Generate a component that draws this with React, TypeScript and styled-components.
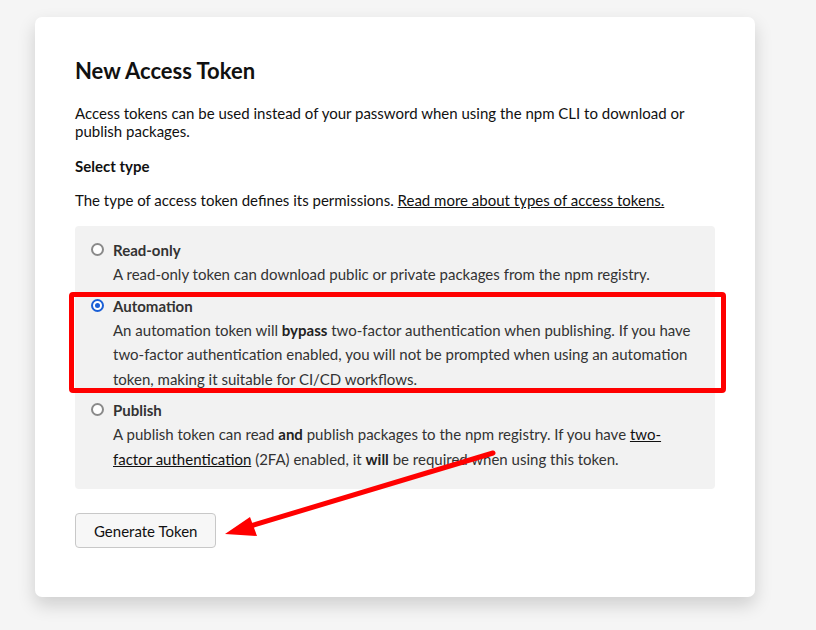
import React from "react";
import styled, { createGlobalStyle } from "styled-components";

const Global = createGlobalStyle`
  html, body { margin: 0; padding: 0; background: #f5f5f5; }
  body { font-family: "Lato", "Noto Sans", sans-serif; color: #111; }
  * { box-sizing: border-box; }
`;

const Page = styled.div`
  width: 816px;
  height: 630px;
  padding: 17px 0 0 35px;
`;

const Card = styled.div`
  position: relative;
  width: 720px;
  height: 580px;
  background: #fff;
  border-radius: 7px;
  box-shadow: 0 8px 18px rgba(0, 0, 0, 0.16);
  padding: 40px 40px;
`;

const Title = styled.h1`
  margin: 0 0 19px 0;
  font-size: 22px;
  line-height: 28px;
  font-weight: 700;
  color: #111;
`;

const Para = styled.p<{ $mb?: number }>`
  margin: 0 0 ${(p) => p.$mb ?? 0}px 0;
  font-size: 15px;
  line-height: 18px;
  color: #111;
`;

const SubHead = styled.div`
  margin: 0 0 16px 0;
  font-size: 15px;
  line-height: 18px;
  font-weight: 700;
  color: #111;
`;

const Link = styled.a`
  color: #111;
  text-decoration: underline;
`;

const Options = styled.div`
  margin-top: 17px;
  background: #f2f2f2;
  border-radius: 4px;
  padding: 12px 16px 18px 16px;
  display: flex;
  flex-direction: column;
  gap: 7px;
`;

const Option = styled.div`
  position: relative;
  display: flex;
  gap: 9px;
  align-items: flex-start;
`;

const OptionBody = styled.div`
  flex: 1;
  display: flex;
  flex-direction: column;
`;

const Radio = styled.span<{ $checked?: boolean }>`
  flex: none;
  margin-top: 5px;
  width: 13px;
  height: 13px;
  border-radius: 50%;
  border: 2px solid ${(p) => (p.$checked ? "#1a5fd6" : "#8a8a8a")};
  background: #fff;
  display: flex;
  align-items: center;
  justify-content: center;
  &::after {
    content: "";
    width: 5px;
    height: 5px;
    border-radius: 50%;
    background: ${(p) => (p.$checked ? "#1a5fd6" : "transparent")};
  }
`;

const OptionLabel = styled.div`
  font-size: 15px;
  line-height: 24px;
  font-weight: 700;
  color: #333;
`;

const OptionDesc = styled.div`
  font-size: 15px;
  line-height: 24.5px;
  color: #333;
  b { color: #222; }
  a { color: #111; text-decoration: underline; }
`;

const Highlight = styled.div`
  position: absolute;
  left: -22px;
  right: -27px;
  top: -2px;
  bottom: -2px;
  border: 5px solid #ff0000;
  border-radius: 4px;
  pointer-events: none;
`;

const Button = styled.button`
  margin-top: 24px;
  height: 35px;
  padding: 0 18px;
  background: #f7f7f7;
  border: 1px solid #c8c8c8;
  border-radius: 4px;
  font-family: inherit;
  font-size: 15px;
  color: #111;
`;

const Arrow = styled.svg`
  position: absolute;
  left: 0;
  top: 0;
  pointer-events: none;
`;

export default function App() {
  return (
    <>
      <Global />
      <Page>
        <Card>
          <Title>New Access Token</Title>
          <Para $mb={17}>
            Access tokens can be used instead of your password when using the npm CLI to download or
            publish packages.
          </Para>
          <SubHead>Select type</SubHead>
          <Para>
            The type of access token defines its permissions.{" "}
            <Link>Read more about types of access tokens.</Link>
          </Para>
          <Options>
            <Option>
              <Radio />
              <OptionBody>
                <OptionLabel>Read-only</OptionLabel>
                <OptionDesc>
                  A read-only token can download public or private packages from the npm registry.
                </OptionDesc>
              </OptionBody>
            </Option>
            <Option>
              <Radio $checked />
              <OptionBody>
                <OptionLabel>Automation</OptionLabel>
                <OptionDesc>
                  An automation token will <b>bypass</b> two-factor authentication when publishing. If you
                  have two-factor authentication enabled, you will not be prompted when using an automation
                  token, making it suitable for CI/CD workflows.
                </OptionDesc>
              </OptionBody>
              <Highlight />
            </Option>
            <Option>
              <Radio />
              <OptionBody>
                <OptionLabel>Publish</OptionLabel>
                <OptionDesc>
                  A publish token can read <b>and</b> publish packages to the npm registry. If you have{" "}
                  <a>two-factor authentication</a> (2FA) enabled, it <b>will</b> be required when using
                  this token.
                </OptionDesc>
              </OptionBody>
            </Option>
          </Options>
          <Button>Generate Token</Button>
          <Arrow width="720" height="580" viewBox="0 0 720 580">
            <line x1="458" y1="436" x2="212" y2="510" stroke="#ff0000" strokeWidth="5" strokeLinecap="round" />
            <polygon points="190,517 215,500 222,519" fill="#ff0000" />
          </Arrow>
        </Card>
      </Page>
    </>
  );
}
